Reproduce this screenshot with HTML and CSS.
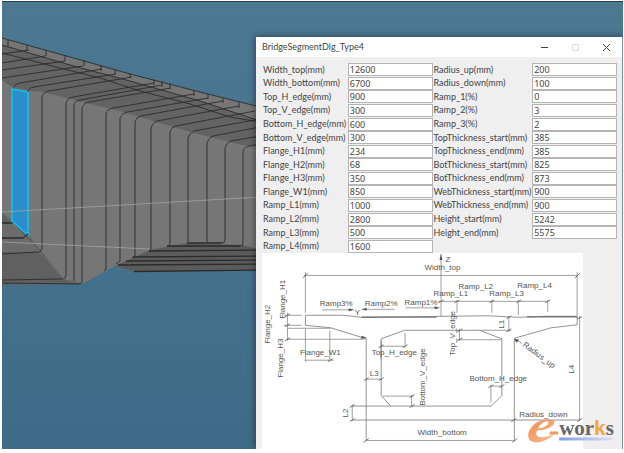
FILE: index.html
```html
<!DOCTYPE html>
<html lang="en">
<head>
<meta charset="utf-8">
<title>BridgeSegmentDlg_Type4</title>
<link rel="stylesheet" href="styles.css">
</head>
<body>
<main class="viewport">
  <svg class="scene" viewBox="2 1 621 449" preserveAspectRatio="xMinYMin slice" aria-hidden="true">
    <defs>
      <linearGradient id="sky" x1="0" y1="0" x2="0" y2="1"><stop offset="0" stop-color="#4c7892"/><stop offset="1" stop-color="#3e6b87"/></linearGradient>
    </defs>
    <rect x="2" y="1" width="622" height="449" fill="url(#sky)"/>
    <path d="M2 38L70 57L130 74L200 92L260 107V270L134 272L115 266L82 284L2 285Z" fill="#767676"/>
    <path d="M2 45L70 65L130 81L200 101L260 121V147L242 145L190 132L120 111L82 102L43 92L28 91L13 88L2 80Z" fill="#636363"/>
    <path d="M2 212L28 235L64 279L82 284L2 285Z" fill="#606060"/>
    <path d="M2 223H13L25 237L40 252H2Z" fill="#6b6b6b"/>
    <path d="M150 250L188 243L243 245L260 250V270L134 272L115 266Z" fill="#5b5b5b"/>
    <path d="M12 89L28 92V235L12 221Z" fill="#2b8dca" stroke="#08c5f3" stroke-width="1.5"/>
    <g fill="none" stroke="#2b2b2b" stroke-width=".9">
      <path d="M2 38L70 57L130 74L200 92L260 107M2 45L70 65L130 81L200 101L260 121"/>
      <path d="M2 53L60 68L100 78L140 91L190 104L230 117L260 122"/>
      <path d="M8 40V46M27 45V51M46 50V56M65 55V61M84 60V66M101 65V71M115 69V74M130 73V78M154 79V85M162 81V87M170 83V89M194 90V96M208 94V99M223 98V103M239 102V108"/>
      <path d="M2 54L29 50M2 63L45 56M2 70L65 61M2 78L83 66M14 88Q14 84 20 83L102 69M28 92Q28 88 34 87L116 74M42 160V97Q43 92 49 91L132 77M66 160V103Q67 98 73 97L154 83M74 160V106Q74 101 80 100L162 85M82 160V109Q83 103 89 102L171 88M106 160V114Q107 109 113 108L194 94M120 160V118Q121 114 127 112L208 98M135 160V122Q136 117 141 116L223 101M151 160V128Q152 123 157 121L239 106M170 160V132Q171 127 176 126L255 111M188 160V138Q189 133 194 131L260 119M207 160V143Q208 138 213 136L260 127M225 160V148Q226 143 231 141L260 136M243 160V151Q244 147 250 146L260 144"/>
      <path d="M42 160V247Q42 252 38 252L2 254M66 160V275Q66 279 62 279L2 280M74 160V281M82 160V282Q82 284 78 284L2 283M106 160V269L104 271M120 160V261L116 264M135 160V256L132 258M151 160V249L149 251M170 160V244L167 247M188 160V242M207 160V242M225 160V240Q225 243 222 243M243 160V243Q243 246 240 246"/>
      <path d="M2 223H13M2 238H23L28 234M187 243H222M167 246H240M149 251L260 250M133 257L260 256M126 261L260 260M118 265L260 264M134 271.500L260 270" stroke-width="1.300"/>
    </g>
    <path d="M2 212L64 279M2 84L260 152" fill="none" stroke="#858585" stroke-width=".6" opacity=".6"/>
    <path d="M2 212L260 197M2 242L150 249" fill="none" stroke="#a2a2a2" stroke-width=".8"/>
    <path d="M2 1.500H623" stroke="#213f50"/>
  </svg>

  <section class="dialog" aria-labelledby="dialog-title">
    <header class="titlebar">
      <h1 id="dialog-title">BridgeSegmentDlg_Type4</h1>
      <button class="caption" type="button" aria-label="Minimize"><svg viewBox="0 0 9 9"><path d="M1 4.500H8"/></svg></button>
      <button class="caption" type="button" aria-label="Maximize" disabled><svg viewBox="0 0 9 9"><path d="M1.500 1.500H7.500V7.500H1.500Z"/></svg></button>
      <button class="caption" type="button" aria-label="Close"><svg viewBox="0 0 9 9"><path d="M1 1L8 8M8 1L1 8"/></svg></button>
    </header>
    <form class="params">
      <div class="group">
        <label for="a1">Width_top(mm)</label><input id="a1" value="12600">
        <label for="a2">Width_bottom(mm)</label><input id="a2" value="6700">
        <label for="a3">Top_H_edge(mm)</label><input id="a3" value="900">
        <label for="a4">Top_V_edge(mm)</label><input id="a4" value="300">
        <label for="a5">Bottom_H_edge(mm)</label><input id="a5" value="600">
        <label for="a6">Bottom_V_edge(mm)</label><input id="a6" value="300">
        <label for="a7">Flange_H1(mm)</label><input id="a7" value="234">
        <label for="a8">Flange_H2(mm)</label><input id="a8" value="68">
        <label for="a9">Flange_H3(mm)</label><input id="a9" value="350">
        <label for="a10">Flange_W1(mm)</label><input id="a10" value="850">
        <label for="a11">Ramp_L1(mm)</label><input id="a11" value="1000">
        <label for="a12">Ramp_L2(mm)</label><input id="a12" value="2800">
        <label for="a13">Ramp_L3(mm)</label><input id="a13" value="500">
        <label for="a14">Ramp_L4(mm)</label><input id="a14" value="1600">
      </div>
      <div class="group group-wide">
        <label for="b1">Radius_up(mm)</label><input id="b1" value="200">
        <label for="b2">Radius_down(mm)</label><input id="b2" value="100">
        <label for="b3">Ramp_1(%)</label><input id="b3" value="0">
        <label for="b4">Ramp_2(%)</label><input id="b4" value="3">
        <label for="b5">Ramp_3(%)</label><input id="b5" value="2">
        <label for="b6">TopThickness_start(mm)</label><input id="b6" value="385">
        <label for="b7">TopThickness_end(mm)</label><input id="b7" value="385">
        <label for="b8">BotThickness_start(mm)</label><input id="b8" value="825">
        <label for="b9">BotThickness_end(mm)</label><input id="b9" value="873">
        <label for="b10">WebThickness_start(mm)</label><input id="b10" value="900">
        <label for="b11">WebThickness_end(mm)</label><input id="b11" value="900">
        <label for="b12">Height_start(mm)</label><input id="b12" value="5242">
        <label for="b13">Height_end(mm)</label><input id="b13" value="5575">
      </div>
    </form>
    <svg class="section" viewBox="262 253 361 197" role="img" aria-label="Bridge cross-section dimensions">
      <defs>
        <linearGradient id="swoosh" x1="0" y1="0" x2="1" y2="1"><stop offset="0" stop-color="#ef8a50"/><stop offset="1" stop-color="#f8c09a"/></linearGradient>
        <linearGradient id="bar"><stop offset="0" stop-color="#7f9cdc"/><stop offset="1" stop-color="#d9e0f2"/></linearGradient>
      </defs>
      <rect x="262" y="253" width="322" height="197" fill="#fff"/>
      <g class="outline">
        <path d="M305.500 325.500V315.500H344L362 317.500L441 316.500L490 316L519 317.500L545 316.500H578V325L552 328L515 338.500V441"/>
        <path d="M305.500 325.500L331 328L366.500 339V441"/>
        <path d="M405 330.500H480L502.500 339V396L492 406.500H391L381.500 396V339Z"/>
        <path d="M352 406.500H391M352 420.500H581"/>
        <path d="M362 317.500H378M377 317.300H437M528 317H578" stroke-width="1.400"/>
      </g>
      <g class="dims">
        <path d="M305.500 272V313M305.500 329V362M304 275.500H578M578 272V316M580.500 316V421"/>
        <path d="M284 315.500H302M284 325.500H302M287 328.500H331M287 339.500H365M287.500 313V341M330 331V361M305 360.500H334"/>
        <path d="M322 310H354M362 309.500H395M406 308H440M441.500 254V317"/>
        <path d="M438 301.500H549M457.500 300V313M492.500 300V313M519 300V315M548.500 300V312"/>
        <path d="M480 330.500H512M509.500 316V332M502 340H458M460 329V341M381 346.500H405M381.500 340V360M405.500 333V348"/>
        <path d="M366 379.500H382M383 396.500H414M412 396V407M352.500 405V421M366 441H516M491.500 386V403M491 386.500H503M516 339L523 344"/>
      </g>
      <path class="ticks" d="M303 278L308 273M576 278L581 273M285 317L290 314M285 327L290 324M285 341L290 338M328 362L333 359M439 303L444 300M455 303L460 300M490 303L495 300M517 303L522 300M546 303L551 300M507 319L512 316M507 332L512 329M578 319L583 317M458 332L463 329M458 341L463 338M379 348L384 345M403 348L408 345M364 381L369 378M379 381L384 378M410 398L415 395M410 408L415 405M350 408L355 405M350 422L355 419M364 443L369 439M513 443L518 439M489 388L494 385M500 388L505 385M512 422L517 419M578 422L583 419"/>
      <path class="arrows" d="M354 310L349 308.500V311.500ZM362 309.500L367 308V311ZM440 308L435 306.500V309.500ZM441.500 254L440 260H443ZM515 339L520 340L517 343ZM367 338L362 336L361 339Z"/>
      <g class="notes">
        <text x="425" y="270">Width_top</text><text x="446" y="262">Z</text><text x="355" y="315">Y</text>
        <text x="320" y="306">Ramp3%</text><text x="365" y="306">Ramp2%</text><text x="405" y="305">Ramp1%</text>
        <text x="434" y="296">Ramp_L1</text><text x="459" y="289">Ramp_L2</text><text x="490" y="296">Ramp_L3</text><text x="518" y="288">Ramp_L4</text>
        <text x="300" y="355">Flange_W1</text><text x="372" y="355">Top_H_edge</text><text x="470" y="381">Bottom_H_edge</text>
        <text x="370" y="376">L3</text><text x="520" y="417">Radius_down</text><text x="418" y="436">Width_bottom</text>
        <text transform="translate(285 319) rotate(-90)">Flange_H1</text>
        <text transform="translate(270 344) rotate(-90)">Flange_H2</text>
        <text transform="translate(283 378) rotate(-90)">Flange_H3</text>
        <text transform="translate(456 356) rotate(-90)">Top_V_edge</text>
        <text transform="translate(425 406) rotate(-90)">Bottom_V_edge</text>
        <text transform="translate(505 329) rotate(-90)">L1</text>
        <text transform="translate(348 418) rotate(-90)">L2</text>
        <text transform="translate(575 374) rotate(-90)">L4</text>
        <text transform="translate(523 346) rotate(37)">Radius_up</text>
      </g>
      <g>
        <path d="M550 420C539 419 529 428 529 436C529 443 536 444 543 442C549 440 553 437 557 433C551 437 543 439 539 437C536 435 537 433 538 431C545 431 553 428 555 424C556 421 554 420 550 420ZM539 429C541 424 546 421 549 422C550 425 546 428 539 429Z" fill="url(#swoosh)"/>
        <path d="M551 432H559V435H550Z" fill="#ef9a60"/>
        <rect x="560" y="438" width="53" height="3" fill="url(#bar)"/>
        <text class="brand" x="560" y="436">wor<tspan class="brand-accent">k</tspan>s</text>
      </g>
    </svg>
  </section>
</main>
</body>
</html>
```
FILE: styles.css
```css
* { box-sizing: border-box; }

body {
  margin: 0;
  padding: 1px 1px 3px 2px;
  background: #fff;
  font-family: Lato, "Noto Sans", sans-serif;
  color: #444;
}

.viewport {
  position: relative;
  display: flex;
  overflow: hidden;
  background: #416e89;
}

.scene {
  position: absolute;
  inset: 0;
  width: 100%;
  height: 100%;
}

.dialog {
  position: relative;
  flex: 1;
  margin: 36px 0 0 254px;
  background: #efefef;
  border-right: 1px solid #7c8f9a;
  box-shadow: 0 0 7px rgba(0, 0, 0, 0.5);
}

.titlebar {
  display: flex;
  align-items: center;
  height: 20px;
  padding-left: 6px;
  background: #fff;
}

.titlebar h1 {
  flex: 1;
  margin: 0;
  font-size: 9px;
  font-weight: 400;
  line-height: 12px;
}

.caption {
  display: grid;
  place-items: center;
  width: 31px;
  height: 20px;
  padding: 0;
  border: 0;
  background: none;
}

.caption svg {
  width: 9px;
  height: 9px;
  fill: none;
  stroke: #444;
}

.caption:disabled svg { stroke: #ddd; }

.params {
  display: grid;
  grid-template-columns: 170fr 185fr;
  height: 196px;
  padding: 6px 5px 0 7px;
}

.group {
  display: grid;
  grid-template-columns: 85fr 85fr;
  grid-template-rows: repeat(14, 1fr);
  align-items: center;
}

.group-wide { grid-template-columns: 100fr 85fr; }

.group label {
  min-width: 0;
  font-size: 9px;
  line-height: 12px;
  white-space: nowrap;
}

.group-wide label { padding-left: 1px; }

.group input {
  width: 100%;
  min-width: 0;
  height: 13px;
  padding: 0 1px;
  border: 1px solid #b4b4b4;
  background: #fff;
  color: #444;
  font: 9px/11px "Noto Sans", "Open Sans", sans-serif;
}

.section {
  display: block;
  width: calc(100% - 6px);
  margin-left: 6px;
}

.outline, .dims, .ticks { fill: none; stroke: #777; stroke-width: 0.8; }
.dims { stroke: #888; }
.ticks { stroke: #555; }
.arrows { fill: #555; }

.notes {
  fill: #555;
  font: 8px "Liberation Sans", sans-serif;
}

.brand {
  fill: #666;
  font: bold 21px "Liberation Serif", serif;
}

.brand-accent {
  fill: #f3a63b;
  font-family: "Liberation Sans", sans-serif;
}
```
